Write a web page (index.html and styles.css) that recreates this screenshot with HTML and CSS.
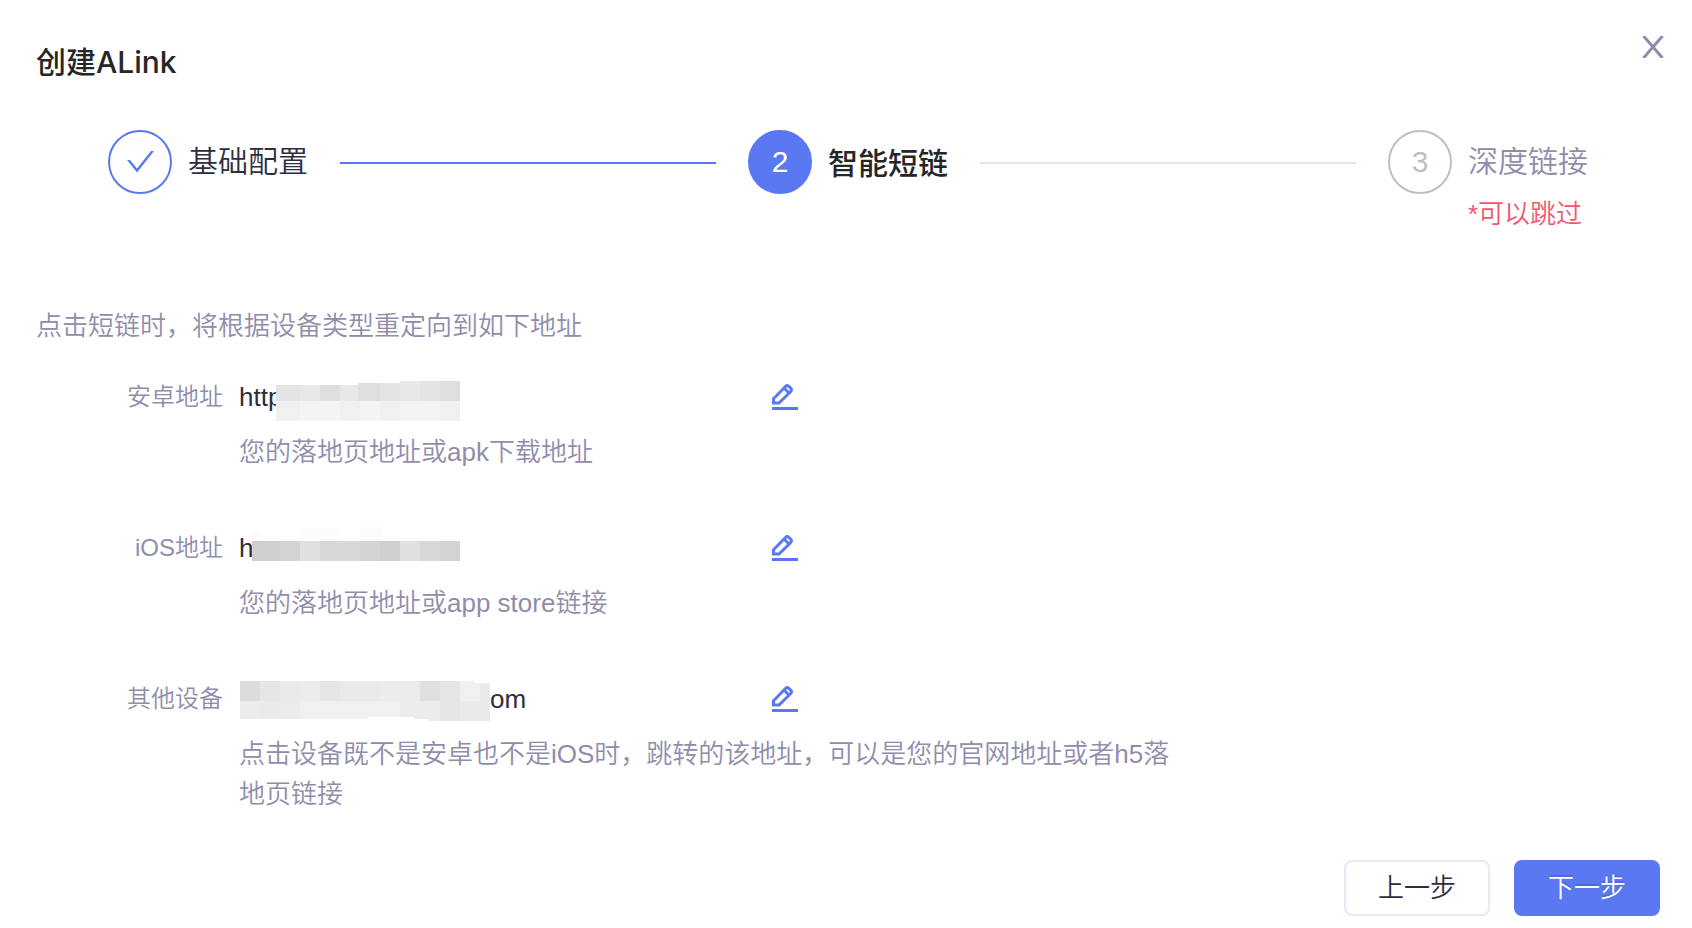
FILE: index.html
```html
<!DOCTYPE html>
<html lang="zh-CN">
<head>
    <meta charset="UTF-8">
    <meta name="viewport" content="width=device-width, initial-scale=1.0">
    <title>创建ALink</title>
    <link rel="stylesheet" href="styles.css">
</head>
<body>
    <div class="dialog">
        <header class="dialog-header">
            <h1>创建ALink</h1>
            <button type="button" class="close-btn" aria-label="关闭">
                <svg width="22" height="22" viewBox="0 0 22 22"><path d="M1.500 0L20.500 22M20.500 0L1.500 22"/></svg>
            </button>
        </header>

        <ol class="steps">
            <li class="step done">
                <span class="step-icon">
                    <svg width="28" height="24" viewBox="0 0 28 24"><path d="M1 10H4L11 18.500L25 1H28L11 22.500Z"/></svg>
                </span>
                <span class="step-title">基础配置</span>
            </li>
            <li class="step active">
                <span class="step-icon">2</span>
                <span class="step-title">智能短链</span>
            </li>
            <li class="step wait">
                <span class="step-icon">3</span>
                <div class="step-text">
                    <span class="step-title">深度链接</span>
                    <span class="step-note">*可以跳过</span>
                </div>
            </li>
        </ol>

        <main class="content">
            <p class="intro">点击短链时，将根据设备类型重定向到如下地址</p>

            <dl class="address">
                <dt>安卓地址</dt>
                <dd class="address-value">
                    <span class="url">http<svg class="mask-android" width="184" height="48" viewBox="0 0 184 48" shape-rendering="crispEdges">
                        <path fill="#fff" d="M0 8h184v40H0z"/>
                        <path fill="#e4e4e4" d="M0 12h24v16H0zM104 10h20v18h-20zM144 8h20v20h-20z"/>
                        <path fill="#e8e8e8" d="M24 12h20v16H24zM64 12h18v16H64zM124 8h20v20h-20z"/>
                        <path fill="#dedede" d="M44 12h20v16H44zM82 10h22v18H82zM164 8h20v20h-20z"/>
                        <path fill="#f0f0f0" d="M0 28h24v20H0zM64 28h20v20H64zM104 28h20v20h-20zM164 28h20v20h-20z"/>
                        <path fill="#f4f4f4" d="M24 28h40v20H24zM84 28h20v20H84zM124 28h40v20h-40z"/>
                    </svg></span>
                    <button type="button" class="edit-btn" aria-label="编辑安卓地址">
                        <svg width="26" height="26" viewBox="0 0 26 26"><path class="pen" d="M1.500 19V14.800L13.500 2.500Q15.200 .8 17 2.500L18.800 4.300Q20.200 6 18.500 7.700L7 19ZM12.500 4.500L16.700 8.700"/><path class="line" d="M0 24.500H26"/></svg>
                    </button>
                </dd>
                <dd class="hint">您的落地页地址或apk下载地址</dd>
            </dl>

            <dl class="address">
                <dt>iOS地址</dt>
                <dd class="address-value">
                    <span class="url">h<svg class="mask-ios" width="208" height="48" viewBox="0 0 208 48" shape-rendering="crispEdges">
                        <path fill="#fcfcfc" d="M0 8h8v9H0zM48 5h40v12H48zM108 3h22v14h-22z"/>
                        <path fill="#cfcfd0" d="M0 17h28v20H0zM128 17h20v20h-20z"/>
                        <path fill="#d3d3d4" d="M28 17h20v20H28zM108 17h20v20h-20zM188 17h20v20h-20z"/>
                        <path fill="#e0e0e1" d="M48 17h20v20H48zM148 17h20v20h-20z"/>
                        <path fill="#d7d7d8" d="M68 17h40v20H68zM168 17h20v20h-20z"/>
                    </svg></span>
                    <button type="button" class="edit-btn" aria-label="编辑iOS地址">
                        <svg width="26" height="26" viewBox="0 0 26 26"><path class="pen" d="M1.500 19V14.800L13.500 2.500Q15.200 .8 17 2.500L18.800 4.300Q20.200 6 18.500 7.700L7 19ZM12.500 4.500L16.700 8.700"/><path class="line" d="M0 24.500H26"/></svg>
                    </button>
                </dd>
                <dd class="hint">您的落地页地址或app store链接</dd>
            </dl>

            <dl class="address">
                <dt>其他设备</dt>
                <dd class="address-value">
                    <span class="url"><svg width="251" height="48" viewBox="-1 0 251 48" shape-rendering="crispEdges">
                        <path fill="#dcdcdc" d="M0 6h20v20H0z"/>
                        <path fill="#e6e6e6" d="M20 6h20v20H20zM80 6h20v20H80zM200 6h20v20h-20zM200 26h20v20h-20z"/>
                        <path fill="#e0e0e0" d="M180 6h20v20h-20z"/>
                        <path fill="#eaeaea" d="M40 6h20v20H40zM100 6h40v20h-40zM20 26h20v18H20zM220 26v20h30V26zM240 8h10v18h-10z"/>
                        <path fill="#ececec" d="M60 6h20v20H60zM140 6h40v20h-40zM0 26h20v18H0zM40 26h20v18H40zM160 26h40v20h-12v-2h-14v-2h-14z"/>
                        <path fill="#f0f0f0" d="M60 26h20v18H60zM80 26h80v16h-32v2H80zM220 6h14v2h6v18h-20z"/>
                    </svg>om</span>
                    <button type="button" class="edit-btn" aria-label="编辑其他设备地址">
                        <svg width="26" height="26" viewBox="0 0 26 26"><path class="pen" d="M1.500 19V14.800L13.500 2.500Q15.200 .8 17 2.500L18.800 4.300Q20.200 6 18.500 7.700L7 19ZM12.500 4.500L16.700 8.700"/><path class="line" d="M0 24.500H26"/></svg>
                    </button>
                </dd>
                <dd class="hint">点击设备既不是安卓也不是iOS时，跳转的该地址，可以是您的官网地址或者h5落地页链接</dd>
            </dl>
        </main>

        <footer class="dialog-footer">
            <button type="button" class="btn">上一步</button>
            <button type="button" class="btn btn-primary">下一步</button>
        </footer>
    </div>
</body>
</html>
```

FILE: styles.css
```css
* {
    margin: 0;
    padding: 0;
    box-sizing: border-box;
}

body {
    font-family: "Liberation Sans", "Noto Sans CJK SC", sans-serif;
    font-size: 26px;
    font-weight: 350;
    line-height: 40px;
    color: #2f2d3f;
    background: #fff;
}

button {
    font: inherit;
    background: none;
    border: none;
    cursor: pointer;
}

svg {
    display: block;
    flex: none;
}

.dialog {
    display: flex;
    flex-direction: column;
    min-height: 100vh;
    padding-bottom: 12px;
}

.dialog-header {
    display: flex;
    justify-content: space-between;
    align-items: flex-start;
    padding: 36px 28px 0 36px;
}

h1 {
    font-family: Inter, "Noto Sans CJK SC", sans-serif;
    font-size: 30px;
    line-height: 52px;
    font-weight: 500;
    color: #262626;
}

.close-btn svg {
    fill: none;
    stroke: #8f8dab;
    stroke-width: 3;
}

/* steps */
.steps {
    display: flex;
    gap: 32px;
    padding: 42px 104px 0 108px;
    list-style: none;
}

.step {
    display: flex;
    align-items: flex-start;
    gap: 16px;
    font-size: 30px;
    line-height: 64px;
}

.step:not(:last-child) {
    flex: 1;
}

.step:not(:last-child)::after {
    content: "";
    flex: 1;
    height: 2px;
    margin-top: 32px;
    margin-left: 16px;
    background: #e1e2f3;
}

.step.done::after {
    background: #5b78f3;
}

.step-icon {
    display: flex;
    justify-content: center;
    align-items: center;
    width: 64px;
    height: 64px;
    border: 2px solid #5b78f3;
    border-radius: 50%;
}

.step-icon svg {
    fill: #5b78f3;
}

.active .step-icon {
    background: #5b78f3;
    color: #fff;
}

.active .step-title {
    font-weight: 500;
    line-height: 68px;
    color: #262626;
}

.wait .step-icon {
    border-color: #bfbfbf;
    color: #bfbfbf;
}

.wait .step-title {
    color: #8f8dab;
}

.step-text {
    display: flex;
    flex-direction: column;
}

.step-note {
    font-size: 26px;
    line-height: 40px;
    color: #f2556e;
}

/* addresses */
.content {
    padding: 72px 36px 0;
}

.intro {
    margin-bottom: 27px;
    color: #8f8dab;
}

.address {
    display: grid;
    grid-template-columns: 187px minmax(0, 940px);
    column-gap: 16px;
    row-gap: 11px;
    margin-bottom: 52px;
}

.address:last-child {
    margin-bottom: 40px;
}

.address dt {
    font-size: 24px;
    line-height: 48px;
    text-align: right;
    color: #8f8dab;
}

.address-value {
    display: flex;
    align-items: center;
    height: 48px;
}

.url {
    display: flex;
    align-items: center;
    width: 533px;
}

.mask-android {
    margin-left: -6px;
}

.mask-ios {
    margin-left: -1px;
}

.edit-btn svg {
    fill: none;
    stroke: #5b78f3;
}

.edit-btn .pen {
    stroke-width: 3;
}

.edit-btn .line {
    stroke-width: 3;
}

.hint {
    grid-column: 2;
    color: #8f8dab;
}

/* footer */
.dialog-footer {
    display: flex;
    justify-content: flex-end;
    gap: 24px;
    margin-top: auto;
    padding-right: 32px;
}

.btn {
    width: 146px;
    height: 56px;
    border: 2px solid #e8e8f6;
    border-radius: 8px;
    color: #2f2d3f;
}

.btn-primary {
    background: #5b78f3;
    border-color: #5b78f3;
    color: #fff;
    text-shadow: 0 -2px 0 rgba(0, 0, 0, 0.12);
}
```
